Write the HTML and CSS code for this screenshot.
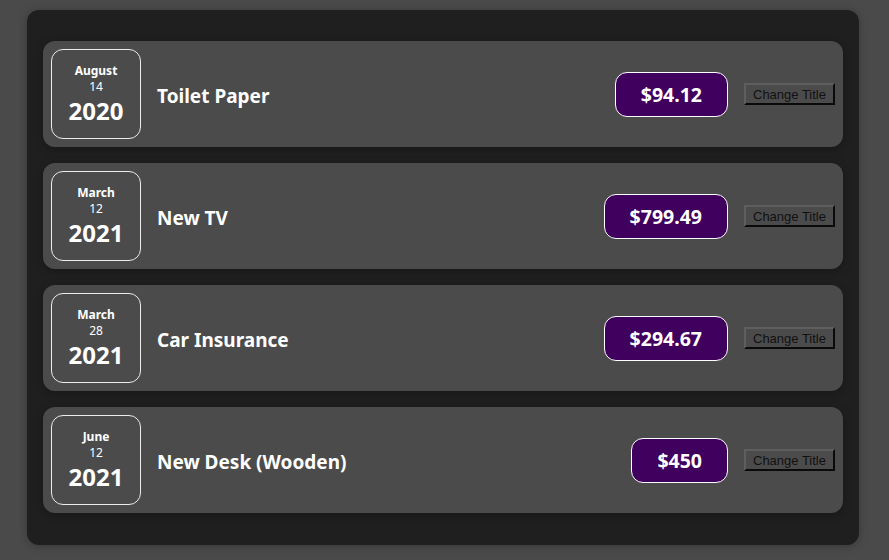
FILE: index.html
```html
<!DOCTYPE html>
<html>
<head>
<meta charset="utf-8">
<link rel="stylesheet" href="styles.css">
</head>
<body>
<div class="expenses">
  <div class="item">
    <div class="date"><div class="month">August</div><div class="day">14</div><div class="year">2020</div></div>
    <div class="desc"><h2>Toilet Paper</h2><div class="price">$94.12</div></div>
    <button class="btn">Change Title</button>
  </div>
  <div class="item">
    <div class="date"><div class="month">March</div><div class="day">12</div><div class="year">2021</div></div>
    <div class="desc"><h2>New TV</h2><div class="price">$799.49</div></div>
    <button class="btn">Change Title</button>
  </div>
  <div class="item">
    <div class="date"><div class="month">March</div><div class="day">28</div><div class="year">2021</div></div>
    <div class="desc"><h2>Car Insurance</h2><div class="price">$294.67</div></div>
    <button class="btn">Change Title</button>
  </div>
  <div class="item">
    <div class="date"><div class="month">June</div><div class="day">12</div><div class="year">2021</div></div>
    <div class="desc"><h2>New Desk (Wooden)</h2><div class="price">$450</div></div>
    <button class="btn">Change Title</button>
  </div>
</div>
</body>
</html>
```
FILE: styles.css
```css
html, body { margin: 0; padding: 0; }
body {
  background: #4a4a4a;
  font-family: "Noto Sans", "Open Sans", sans-serif;
  padding: 10px 30px 15px 27px;
}
.expenses {
  width: 800px;
  padding: 31px 16px 32px;
  background: #1f1f1f;
  border-radius: 12px;
  box-shadow: 0 1px 8px rgba(0,0,0,0.25);
  display: flex;
  flex-direction: column;
  gap: 16px;
}
.item {
  display: flex;
  align-items: center;
  padding: 8px;
  background: #4b4b4b;
  border-radius: 12px;
  box-shadow: 0 2px 8px rgba(0,0,0,0.25);
}
.date {
  box-sizing: border-box;
  width: 90px;
  height: 90px;
  padding-top: 2px;
  border: 1px solid #ececec;
  border-radius: 12px;
  color: #fff;
  display: flex;
  flex-direction: column;
  align-items: center;
  justify-content: center;
}
.month { font-size: 12px; font-weight: 700; line-height: 16px; }
.day { font-size: 12px; line-height: 16px; }
.year { font-size: 24px; font-weight: 700; line-height: 32px; }
.desc {
  flex: 1;
  display: flex;
  align-items: center;
  justify-content: space-between;
  gap: 16px;
  margin-left: 16px;
}
.desc h2 {
  margin: 0;
  padding-top: 3px;
  color: #fff;
  font-size: 19px;
  font-weight: 700;
}
.price {
  color: #fff;
  font-size: 19.5px;
  font-weight: 700;
  background: #40005d;
  border: 1px solid #fff;
  border-radius: 12px;
  padding: 8px 25px;
  line-height: 27px;
}
.btn {
  margin-left: 16px;
  font-family: "Liberation Sans", Arial, sans-serif;
  font-size: 13px;
  color: #111;
  background: #4b4b4b;
  border: 2px solid;
  border-top-color: #5e5e5e;
  border-left-color: #5e5e5e;
  border-right-color: #0a0a0a;
  border-bottom-color: #0a0a0a;
  padding: 1px 7px;
  height: 22px;
}
```
